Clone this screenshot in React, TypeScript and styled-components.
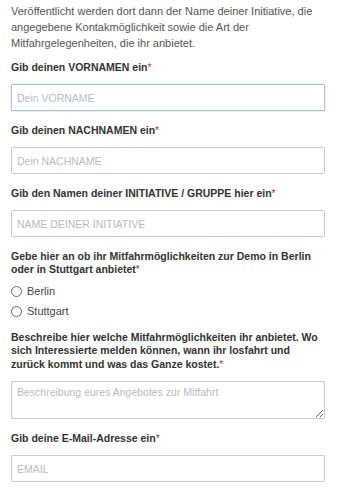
import React from 'react'
import styled, { createGlobalStyle } from 'styled-components'

const Global = createGlobalStyle`
    html, body {
        margin: 0;
        padding: 0;
        background: #fff;
    }
    body {
        font-family: "Liberation Sans", Arial, sans-serif;
    }
`

const Form = styled.form`
    width: 314px;
    padding: 3px 0 0 11px;
    display: flex;
    flex-direction: column;
`
const Intro = styled.p`
    margin: 0 0 9px;
    font-size: 11px;
    line-height: 16px;
    color: #555;
`
const Field = styled.div`
    display: flex;
    flex-direction: column;
    margin-bottom: 12px;
`
const Label = styled.label`
    font-size: 10.5px;
    font-weight: bold;
    line-height: 13.5px;
    color: #333;
    margin-bottom: 10px;
    padding-top: 0.5px;
`
const Star = styled.span`
    color: #c0392b;
    font-weight: normal;
`
const Input = styled.input<{ $focused?: boolean }>`
    box-sizing: border-box;
    width: 100%;
    height: 27px;
    padding: 0 5px;
    font-family: inherit;
    font-size: 10.5px;
    color: #333;
    border: 1px solid ${({ $focused }) => $focused ? '#a9c1dd' : '#ccc'};
    border-radius: 1px;
    box-shadow: ${({ $focused }) => $focused ? '0 0 2px rgba(120,150,190,0.5)' : 'none'};
    outline: none;
    &::placeholder {
        color: #b5bcc6;
    }
`
const Area = styled.textarea`
    box-sizing: border-box;
    width: 100%;
    height: 38px;
    padding: 4px 5px;
    font-family: inherit;
    font-size: 10.5px;
    border: 1px solid #ccc;
    border-radius: 1px;
    outline: none;
    resize: vertical;
    &::placeholder {
        color: #b5bcc6;
    }
`
const Radios = styled.div`
    display: flex;
    flex-direction: column;
    gap: 7px;
    margin-top: -1.5px;
`
const RadioRow = styled.label`
    display: flex;
    align-items: center;
    gap: 5px;
    font-size: 11px;
    color: #444;
    line-height: 13px;
`
const Circle = styled.span`
    box-sizing: border-box;
    width: 11px;
    height: 11px;
    border-radius: 50%;
    border: 1px solid #666;
`

const Req = () => <Star>*</Star>

export default function App() {
    return <>
        <Global />
        <Form onSubmit={(e) => e.preventDefault()}>
            <Intro>Veröffentlicht werden dort dann der Name deiner Initiative, die angegebene Kontakmöglichkeit sowie die Art der Mitfahrgelegenheiten, die ihr anbietet.</Intro>
            <Field>
                <Label>Gib deinen VORNAMEN ein<Req /></Label>
                <Input $focused placeholder='Dein VORNAME' />
            </Field>
            <Field>
                <Label>Gib deinen NACHNAMEN ein<Req /></Label>
                <Input placeholder='Dein NACHNAME' />
            </Field>
            <Field>
                <Label>Gib den Namen deiner INITIATIVE / GRUPPE hier ein<Req /></Label>
                <Input placeholder='NAME DEINER INITIATIVE' />
            </Field>
            <Field>
                <Label>Gebe hier an ob ihr Mitfahrmöglichkeiten zur Demo in Berlin oder in Stuttgart anbietet<Req /></Label>
                <Radios>
                    <RadioRow><Circle />Berlin</RadioRow>
                    <RadioRow><Circle />Stuttgart</RadioRow>
                </Radios>
            </Field>
            <Field>
                <Label>Beschreibe hier welche Mitfahrmöglichkeiten ihr anbietet. Wo sich Interessierte melden können, wann ihr losfahrt und zurück kommt und was das Ganze kostet.<Req /></Label>
                <Area placeholder='Beschreibung eures Angebotes zur Mitfahrt' />
            </Field>
            <Field>
                <Label>Gib deine E-Mail-Adresse ein<Req /></Label>
                <Input placeholder='EMAIL' />
            </Field>
        </Form>
    </>
}
